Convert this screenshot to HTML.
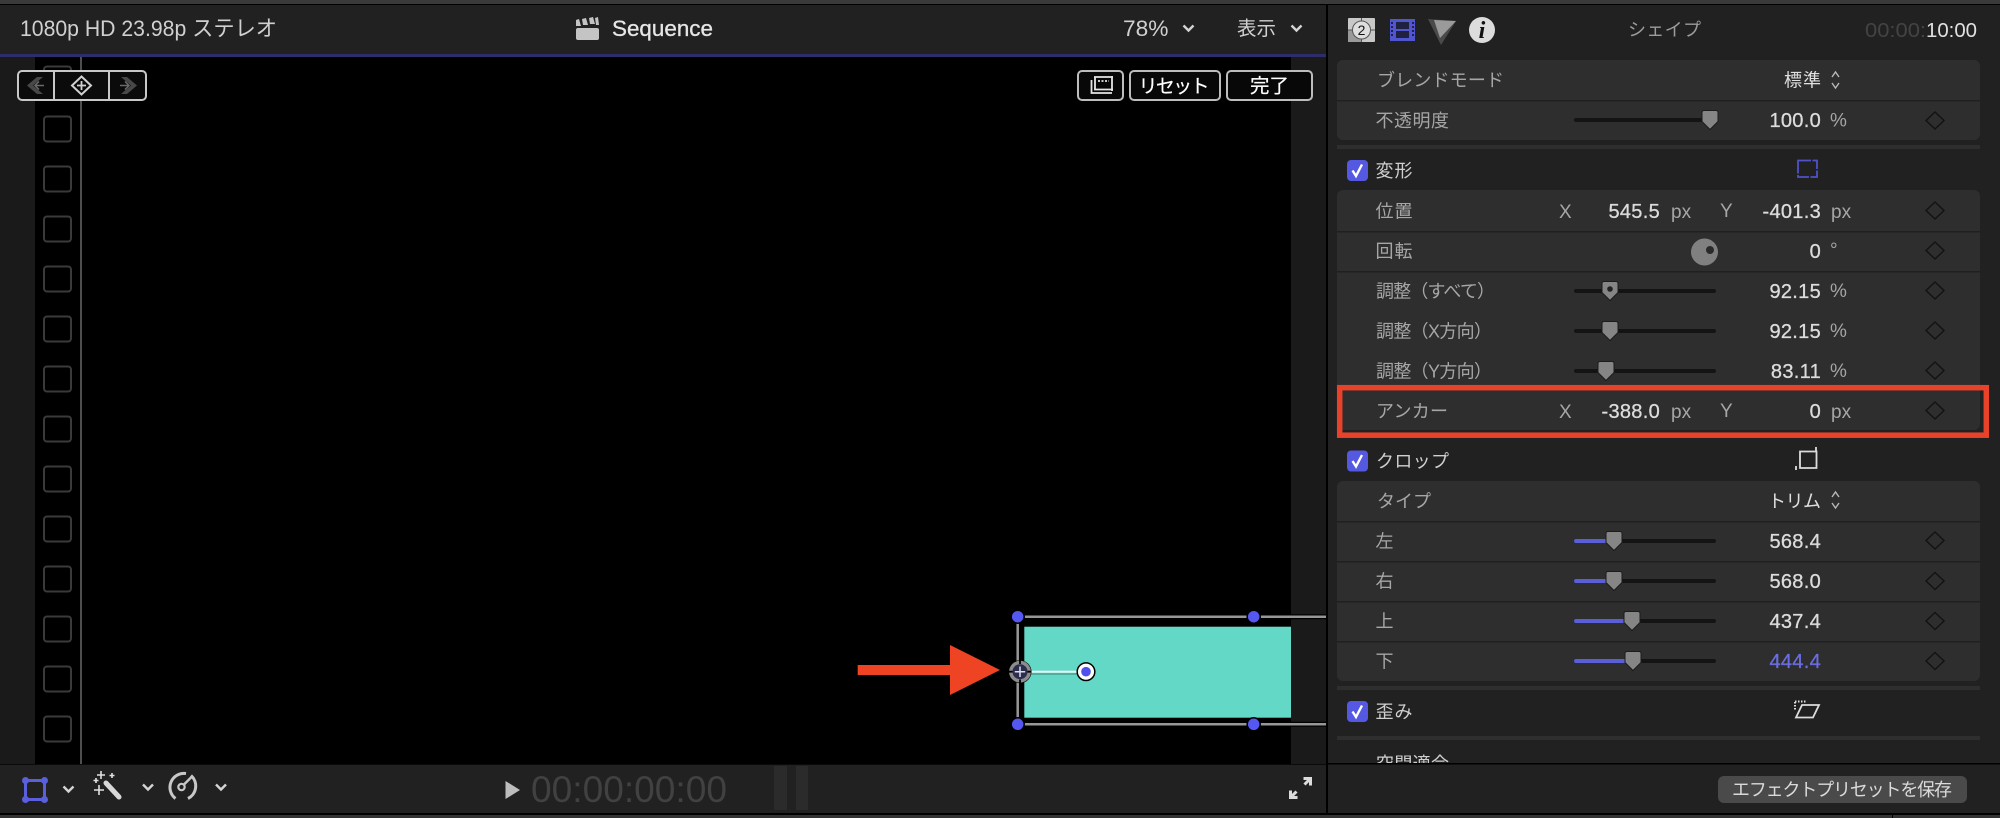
<!DOCTYPE html>
<html lang="ja"><head><meta charset="utf-8"><title>Sequence</title>
<style>
html,body{margin:0;padding:0;background:#000;width:2000px;height:818px;overflow:hidden}
svg{display:block;position:absolute;left:0;top:0}
text{font-family:"Liberation Sans","Noto Sans CJK JP",sans-serif}
.h{font-size:22px;fill:#d0d0d0}
.l{font-size:18px;fill:#a6a6a6}
.s{font-size:18px;fill:#cfcfcf}
.v{font-size:20px;fill:#dcdcdc;text-anchor:end;letter-spacing:.3px;stroke:#dcdcdc;stroke-width:.3px}
.u{font-size:19px;fill:#a6a6a6}
.b{font-size:19px;fill:#fff;stroke:#fff;stroke-width:.2px}
</style></head><body>
<svg width="2000" height="818" viewBox="0 0 2000 818" xmlns="http://www.w3.org/2000/svg">
<defs>
<g id="d"><path d="M0-8.5L9 0 0 8.5-9 0Z" fill="none" stroke="#131313" stroke-width="1.5"/></g>
<g id="t"><path d="M-6-9.5H6Q8-9.5 8-7.5V1.5L0 9.5-8 1.5V-7.5Q-8-9.5-6-9.5Z" fill="#858585" stroke="#1c1c1c" stroke-width="1"/></g>
<g id="c"><rect x="-10.5" y="-10.5" width="21" height="21" rx="4" fill="#5558e0"/><path d="M-5 0L-1.500 5.500 4.500-6" fill="none" stroke="#fff" stroke-width="2.400"/></g>
<g id="ch"><path d="M-5-2.500L0 2.500 5-2.500" fill="none" stroke="#d4d4d4" stroke-width="2.400"/></g>
<g id="ud"><path d="M-3.500-3L0-8 3.500-3M-3.500 3L0 8 3.500 3" fill="none" stroke="#b8b8b8" stroke-width="1.400"/></g>
<g id="sq"><rect x="44" y="-12.500" width="27" height="25" rx="3" fill="none" stroke="#3a3a3a" stroke-width="2"/></g>
<g id="hd"><circle r="6.500" fill="#5558f0" stroke="#000" stroke-width="1.500"/></g>
</defs>

<!-- backgrounds -->
<rect width="2000" height="818" fill="#000"/>
<rect width="2000" height="4" fill="#3a3a3a"/>
<rect y="5" width="2000" height="808" fill="#212121"/>
<rect y="813" width="2000" height="2" fill="#000"/>
<rect y="815" width="2000" height="3" fill="#333"/>
<rect x="1892" y="815" width="1" height="3" fill="#000"/>

<!-- viewer -->
<rect y="54" width="1326" height="3" fill="#2d2d6a"/>
<rect y="57" width="1326" height="707" fill="#000"/>
<rect y="57" width="35" height="707" fill="#1a1a1a"/>
<rect x="1291" y="57" width="35" height="707" fill="#1a1a1a"/>
<rect x="80" y="57" width="2" height="707" fill="#4e4e4e"/>
<use href="#sq" y="79"/><use href="#sq" y="129"/><use href="#sq" y="179"/><use href="#sq" y="229"/><use href="#sq" y="279"/><use href="#sq" y="329"/><use href="#sq" y="379"/><use href="#sq" y="429"/><use href="#sq" y="479"/><use href="#sq" y="529"/><use href="#sq" y="579"/><use href="#sq" y="629"/><use href="#sq" y="679"/><use href="#sq" y="729"/>
<rect y="764" width="1326" height="1" fill="#0a0a0a"/>

<!-- dividers -->
<rect x="1326" y="5" width="2" height="808" fill="#000"/>
<rect x="1328" y="763" width="672" height="1.500" fill="#000"/>

<!-- header -->
<text class="h" x="20" y="36" textLength="257" lengthAdjust="spacingAndGlyphs">1080p HD 23.98p ステレオ</text>
<g fill="#c4c4c4"><rect x="576" y="28" width="23" height="12" rx="2"/><path d="M576 20l3-1 2 7h-5zM582 19l4-1 2 7h-5zM589 18l4-1 2 7h-5zM595 18l3-1 1 8h-3z" /></g>
<text class="h" x="612" y="36" textLength="101" lengthAdjust="spacingAndGlyphs" style="fill:#e6e6e6;stroke:#e6e6e6;stroke-width:.3px">Sequence</text>
<text class="h" x="1123" y="36" textLength="45.500" lengthAdjust="spacingAndGlyphs">78%</text>
<use href="#ch" x="1188.500" y="28"/>
<text class="h" x="1237" y="35" textLength="39" lengthAdjust="spacingAndGlyphs" style="font-size:19.500px">表示</text>
<use href="#ch" x="1296.500" y="28"/>

<!-- nav control -->
<rect x="18" y="71" width="128" height="29" rx="4" fill="#0b0b0b" stroke="#c8c8c8" stroke-width="2"/>
<path d="M54 71V100M109 71V100" stroke="#c8c8c8" stroke-width="2"/>
<path d="M37 77L27 85.500 37 94H43L33 85.500 43 77Z" fill="#484848"/>
<path d="M36 85.500H44M39 81.500L35 85.500 39 89.500" fill="none" stroke="#6a6a6a" stroke-width="1.500"/>
<path d="M127 77L137 85.500 127 94H121L131 85.500 121 77Z" fill="#484848"/>
<path d="M128 85.500H120M125 81.500L129 85.500 125 89.500" fill="none" stroke="#6a6a6a" stroke-width="1.500"/>
<path d="M81.500 76.500L91 85.500 81.500 94.500 72 85.500Z" fill="none" stroke="#d0d0d0" stroke-width="2"/>
<path d="M81.500 81V90M77 85.500H86" stroke="#d0d0d0" stroke-width="1.800"/>

<!-- right top buttons -->
<rect x="1078" y="71" width="45" height="29" rx="4" fill="#080808" stroke="#bdbdbd" stroke-width="2"/>
<path d="M1095 76.500V90M1112 76V91M1094 77H1113M1094 89.500H1113" fill="none" stroke="#e6e6e6" stroke-width="1.800"/>
<path d="M1091.500 80V93H1112" fill="none" stroke="#e6e6e6" stroke-width="1.800"/>
<path d="M1098 81H1109" stroke="#e6e6e6" stroke-width="1.800" stroke-dasharray="2 1.500"/>
<rect x="1130" y="71" width="90" height="29" rx="4" fill="#080808" stroke="#bdbdbd" stroke-width="2"/>
<rect x="1227" y="71" width="85" height="29" rx="4" fill="#080808" stroke="#bdbdbd" stroke-width="2"/>
<text class="b" x="1138.500" y="92.500" textLength="71" lengthAdjust="spacing">リセット</text>
<text class="b" x="1250" y="92.500" textLength="39" lengthAdjust="spacing" style="font-size:19.500px">完了</text>

<!-- shape on canvas -->
<rect x="1024.300" y="626.700" width="266.700" height="91" fill="#64d8c6"/>
<path d="M1018 616.700H1326M1018 724.300H1326M1017.700 617V724" stroke="#000" stroke-width="5"/>
<path d="M1018 616.700H1326M1018 724.300H1326M1017.700 617V724" stroke="#979797" stroke-width="2.500"/>
<use href="#hd" x="1017.700" y="616.700"/><use href="#hd" x="1253.700" y="616.700"/><use href="#hd" x="1017.700" y="724.300"/><use href="#hd" x="1253.700" y="724.300"/>
<rect x="1030" y="673" width="50" height="2" fill="#4eae9f"/>
<rect x="1030" y="670.700" width="50" height="2" fill="#e6fbf7"/>
<circle cx="1020" cy="671.700" r="11.500" fill="#000"/>
<circle cx="1020" cy="671.700" r="9.200" fill="#2c2c4c" stroke="#8c8c8c" stroke-width="3.400"/>
<path d="M1020 660V664M1020 679.500V683.500M1008.500 671.700H1012.500M1027.500 671.700H1031.500" stroke="#000" stroke-width="1.800"/>
<path d="M1020 666.500V677M1014.800 671.700H1025.200" stroke="#dcdcf0" stroke-width="1.500"/>
<circle cx="1086" cy="671.700" r="8.800" fill="#fff" stroke="#000" stroke-width="1.500"/>
<circle cx="1086" cy="671.700" r="4.800" fill="#5050ee"/>
<path d="M857.700 665H950V645L1000 670 950 695V675H857.700Z" fill="#ee4423"/>

<!-- bottom bar -->
<g fill="none" stroke="#5a5fdc"><rect x="25.500" y="780.500" width="19" height="19" stroke-width="3"/></g>
<g fill="#5a5fdc"><circle cx="25.500" cy="780.500" r="3.500"/><circle cx="44.500" cy="780.500" r="3.500"/><circle cx="25.500" cy="799.500" r="3.500"/><circle cx="44.500" cy="799.500" r="3.500"/></g>
<use href="#ch" x="68.500" y="789"/>
<path d="M106 783L119 797" stroke="#d8d8d8" stroke-width="5" stroke-linecap="round"/>
<path d="M101 771V779M97 775H105M112 773V778M109.500 775.500H114.500M96 778V783M93.500 780.500H98.500M99 785V795M94 790H104" stroke="#e0e0e0" stroke-width="1.600"/>
<use href="#ch" x="148" y="787"/>
<path d="M175.500 798.500A14 14 0 0 1 186 773.500M191 775.500A14 14 0 0 1 188 798.500" fill="none" stroke="#c8c8c8" stroke-width="3"/>
<circle cx="181.500" cy="787" r="3.200" fill="none" stroke="#c8c8c8" stroke-width="2.200"/>
<path d="M184 784.500L192.500 776" stroke="#c8c8c8" stroke-width="2.500"/>
<use href="#ch" x="221" y="787"/>
<path d="M505.500 781L520 790 505.500 799Z" fill="#bdbdbd"/>
<text x="531" y="802" textLength="196" lengthAdjust="spacingAndGlyphs" style="font-size:37px;fill:#414141">00:00:00:00</text>
<rect x="774" y="766" width="13" height="44" fill="#2b2b2b"/><rect x="796" y="766" width="12" height="44" fill="#2b2b2b"/>
<path d="M1303.500 778.500H1310.500V785.500M1310.500 778.500L1304.500 784.500M1297.500 797.500H1290.500V790.500M1290.500 797.500L1296.500 791.500" fill="none" stroke="#dcdcdc" stroke-width="3"/>

<!-- inspector head icons -->
<rect x="1348" y="18" width="27" height="24" rx="1" fill="#c8c8c8"/>
<rect x="1348" y="30" width="13.500" height="12" fill="#9a9a9a"/>
<path d="M1348 30H1375M1361.500 18V42" stroke="#555" stroke-width="1"/>
<circle cx="1361.500" cy="30" r="9" fill="#dedede" stroke="#555" stroke-width="1"/>
<text x="1361.500" y="35" text-anchor="middle" style="font-size:14px;fill:#111">2</text>
<rect x="1390" y="19" width="25" height="22" fill="#5055d0"/>
<rect x="1396" y="22" width="13" height="7" fill="#202040"/><rect x="1396" y="31" width="13" height="7" fill="#202040"/>
<path d="M1392 22V38M1413 22V38" stroke="#20204a" stroke-width="2" stroke-dasharray="2 2"/>
<path d="M1428 19L1456 21 1441 45Z" fill="#4a4a4a"/><path d="M1434 20L1456 21 1440 38Z" fill="#9a9a9a"/>
<circle cx="1482" cy="30" r="13" fill="#dcdcdc"/>
<text x="1482" y="38" text-anchor="middle" style="font-family:'Liberation Serif',serif;font-size:24px;font-style:italic;font-weight:bold;fill:#111">i</text>
<text x="1628" y="36" textLength="73" lengthAdjust="spacing" style="font-size:18px;fill:#9c9c9c">シェイプ</text>
<text x="1865" y="37" textLength="61" lengthAdjust="spacingAndGlyphs" style="font-size:20px;fill:#434343">00:00:</text>
<text x="1926" y="37" textLength="51" lengthAdjust="spacingAndGlyphs" style="font-size:20px;fill:#e0e0e0">10:00</text>

<!-- panels -->
<g fill="#2e2e2e">
<rect x="1337" y="60" width="643" height="80" rx="6"/>
<rect x="1337" y="145" width="643" height="4"/>
<rect x="1337" y="190" width="643" height="240" rx="6"/>
<rect x="1337" y="481" width="643" height="200" rx="6"/>
<rect x="1337" y="686" width="643" height="4"/>
<rect x="1337" y="736" width="643" height="4"/>
</g>
<g fill="#202020">
<rect x="1337" y="100" width="643" height="1.500"/>
<rect x="1337" y="231" width="643" height="1.500"/>
<rect x="1337" y="271" width="643" height="1.500"/>
<rect x="1337" y="521" width="643" height="1.500"/>
<rect x="1337" y="561" width="643" height="1.500"/>
<rect x="1337" y="601" width="643" height="1.500"/>
<rect x="1337" y="641" width="643" height="1.500"/>
</g>

<!-- section 1 -->
<text class="l" x="1377" y="86.500" textLength="127" lengthAdjust="spacing">ブレンドモード</text>
<text class="s" x="1784" y="86.500" textLength="37" lengthAdjust="spacing" style="fill:#e0e0e0">標準</text>
<use href="#ud" x="1835.500" y="80"/>
<text class="l" x="1375.500" y="127" textLength="73.500" lengthAdjust="spacing">不透明度</text>
<text class="v" x="1821" y="127">100.0</text><text class="u" x="1830" y="126.500">%</text>
<use href="#d" x="1935" y="120.500"/>

<!-- 変形 -->
<use href="#c" x="1357.500" y="170.500"/>
<text class="s" x="1375.500" y="177" textLength="37" lengthAdjust="spacing">変形</text>
<rect x="1798" y="160.500" width="19" height="16.500" fill="none" stroke="#4f52c8" stroke-width="1.800" stroke-dasharray="13 1.500"/>

<text class="l" x="1375.500" y="217.500" textLength="37" lengthAdjust="spacing">位置</text>
<text class="u" x="1559" y="218">X</text><text class="v" x="1660" y="218">545.5</text><text class="u" x="1671" y="218">px</text>
<text class="u" x="1720" y="217">Y</text><text class="v" x="1821" y="218">-401.3</text><text class="u" x="1831" y="218">px</text>
<use href="#d" x="1935" y="210.500"/>

<text class="l" x="1375.500" y="257.500" textLength="37" lengthAdjust="spacing">回転</text>
<circle cx="1704.500" cy="252" r="13.500" fill="#808080"/><circle cx="1710" cy="250" r="4" fill="#2a2a2a"/>
<text class="v" x="1821" y="258">0</text><text class="u" x="1830" y="256">°</text>
<use href="#d" x="1935" y="250.500"/>

<text class="l" x="1376" y="297.500" textLength="119" lengthAdjust="spacing">調整（すべて）</text>
<text class="v" x="1821" y="298">92.15</text><text class="u" x="1830" y="297">%</text>
<use href="#d" x="1935" y="290.500"/>

<text class="l" x="1376" y="337.500" textLength="116" lengthAdjust="spacing">調整（X方向）</text>
<text class="v" x="1821" y="338">92.15</text><text class="u" x="1830" y="337">%</text>
<use href="#d" x="1935" y="330.500"/>

<text class="l" x="1376" y="377.500" textLength="116" lengthAdjust="spacing">調整（Y方向）</text>
<text class="v" x="1821" y="378">83.11</text><text class="u" x="1830" y="377">%</text>
<use href="#d" x="1935" y="370.500"/>

<text class="l" x="1376" y="417.500" textLength="72" lengthAdjust="spacing">アンカー</text>
<text class="u" x="1559" y="418">X</text><text class="v" x="1660" y="418">-388.0</text><text class="u" x="1671" y="418">px</text>
<text class="u" x="1720" y="417">Y</text><text class="v" x="1821" y="418">0</text><text class="u" x="1831" y="418">px</text>
<use href="#d" x="1935" y="410.500"/>

<rect x="1339.700" y="387.700" width="646.600" height="47.500" fill="none" stroke="#e8432a" stroke-width="5.500"/>

<!-- クロップ -->
<use href="#c" x="1357.500" y="461"/>
<text class="s" x="1376" y="467.500" textLength="73" lengthAdjust="spacing">クロップ</text>
<path d="M1800 451.500H1816.500V468H1800Z" fill="none" stroke="#dcdcdc" stroke-width="1.800"/>
<path d="M1816 447V451M1796 466V470" stroke="#dcdcdc" stroke-width="1.800"/>

<text class="l" x="1377" y="507.500" textLength="54" lengthAdjust="spacing">タイプ</text>
<text class="s" x="1768" y="507.500" textLength="53" lengthAdjust="spacing" style="fill:#e0e0e0">トリム</text>
<use href="#ud" x="1835.500" y="500"/>

<text class="l" x="1375.500" y="547.500">左</text><text class="v" x="1821" y="548">568.4</text><use href="#d" x="1935" y="540.500"/>
<text class="l" x="1375.500" y="587.500">右</text><text class="v" x="1821" y="588">568.0</text><use href="#d" x="1935" y="581"/>
<text class="l" x="1375.500" y="627.500">上</text><text class="v" x="1821" y="628">437.4</text><use href="#d" x="1935" y="621"/>
<text class="l" x="1375.500" y="667.500">下</text><text class="v" x="1821" y="668" style="fill:#6a6ee0;stroke:#6a6ee0">444.4</text><use href="#d" x="1935" y="661"/>

<!-- sliders -->
<g stroke="#141414" stroke-width="4" stroke-linecap="round">
<path d="M1576 120H1714M1576 291H1714M1576 331H1714M1576 371H1714M1576 541H1714M1576 581H1714M1576 621H1714M1576 661H1714"/>
</g>
<g stroke="#5a5fd8" stroke-width="4" stroke-linecap="round">
<path d="M1576 541H1612M1576 581H1612M1576 621H1630M1576 661H1631"/>
</g>
<use href="#t" x="1710" y="120"/>
<use href="#t" x="1610" y="291"/><circle cx="1610" cy="289" r="2.800" fill="#222"/>
<use href="#t" x="1610" y="331"/>
<use href="#t" x="1606" y="371"/>
<use href="#t" x="1614" y="541"/>
<use href="#t" x="1614" y="581"/>
<use href="#t" x="1632" y="621"/>
<use href="#t" x="1633" y="661"/>

<!-- 歪み -->
<use href="#c" x="1357.500" y="711.500"/>
<text class="s" x="1375.500" y="718" textLength="37" lengthAdjust="spacing">歪み</text>
<path d="M1802 705H1819L1813 717.500H1796Z" fill="none" stroke="#dcdcdc" stroke-width="1.800"/>
<path d="M1795 701.500H1806M1795 702V711" stroke="#dcdcdc" stroke-width="2" stroke-dasharray="1.500 1.500"/>

<!-- clipped 空間適合 + footer -->
<text class="s" x="1376" y="770" textLength="73" lengthAdjust="spacing">空間適合</text>
<rect x="1328" y="763" width="672" height="50" fill="#212121"/>
<rect x="1328" y="763" width="672" height="1.500" fill="#000"/>
<rect x="1718" y="776" width="249" height="27" rx="6" fill="#4a4a4a"/>
<text x="1732" y="796" textLength="220" lengthAdjust="spacing" style="font-size:18px;fill:#dadada">エフェクトプリセットを保存</text>
</svg>
</body></html>
